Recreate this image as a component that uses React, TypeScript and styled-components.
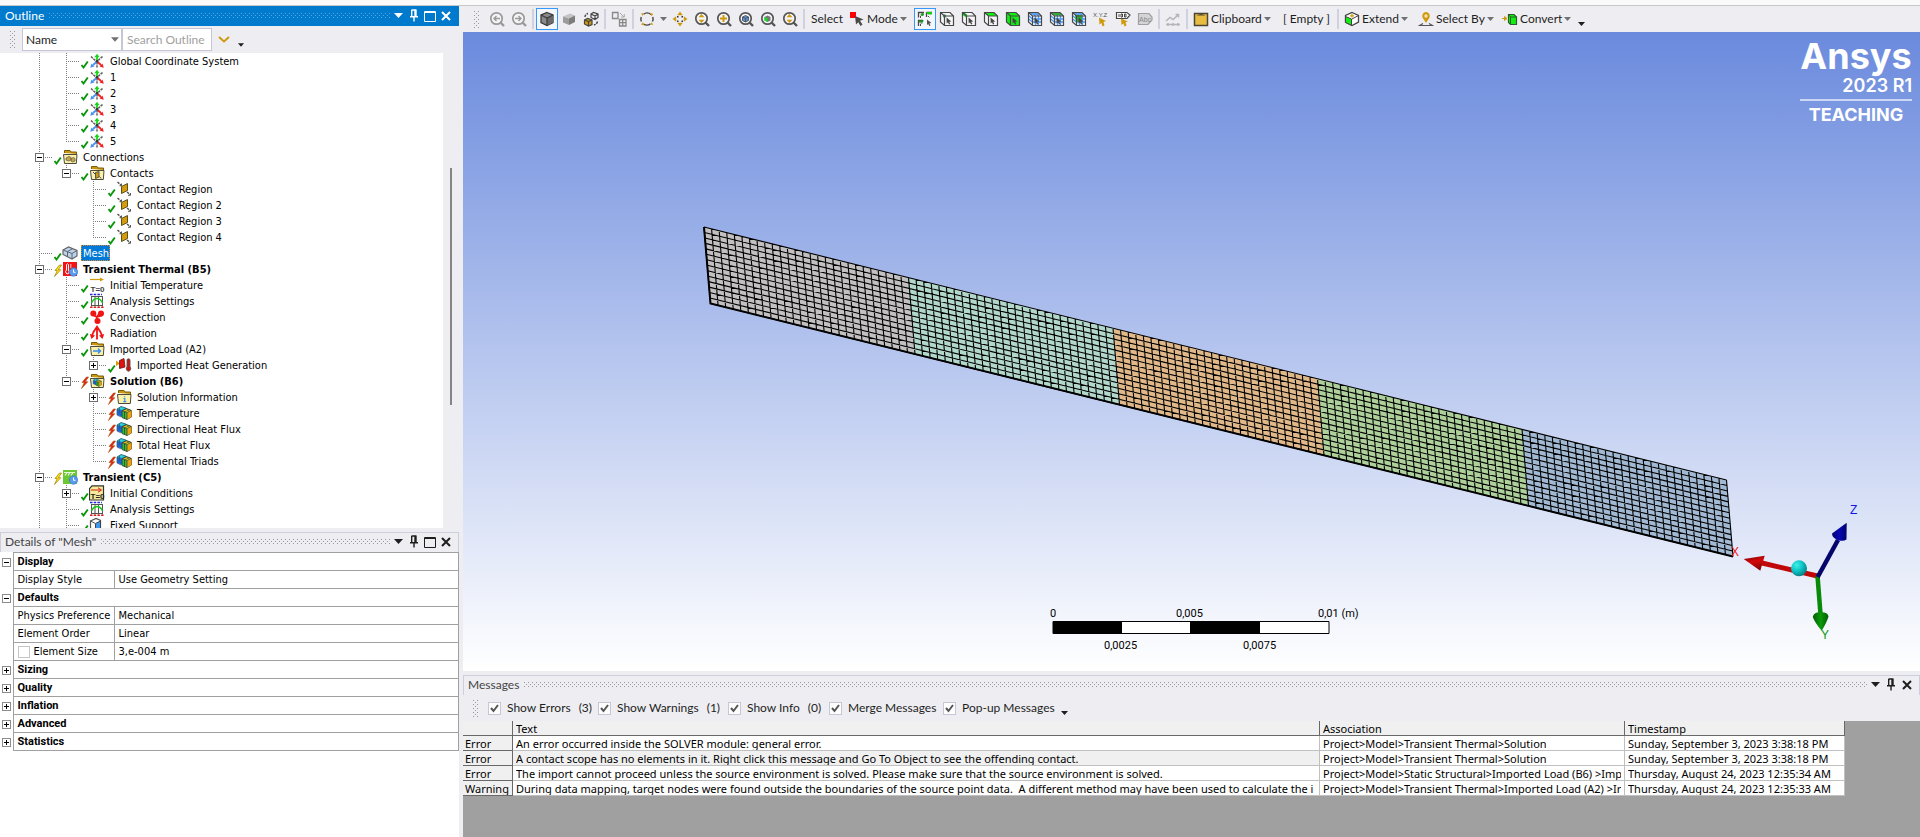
import React from 'react';
import styled, { createGlobalStyle, css } from 'styled-components';

const UI = "Lato, 'Noto Sans', sans-serif";
const TREE = "'DejaVu Sans Condensed', 'Noto Sans', sans-serif";
const GRID = "'Noto Sans', 'Open Sans', sans-serif";

const GlobalStyle = createGlobalStyle`
  * { box-sizing: border-box; }
  body { margin: 0; background: #eeeef2; font: 12px/16px ${UI}; color: #1e1e1e; }
  button, input, select { font: inherit; color: inherit; margin: 0; padding: 0; border: 0; background: none; border-radius: 0; }
`;

/* ---------- page frame ---------- */

const Page = styled.div`
  display: flex;
  flex-direction: column;
  height: 100vh;
  min-height: 600px;
`;
const TopStrip = styled.div`
  flex: none;
  height: 6px;
  background: #fafafa;
  border-bottom: 1px solid #c6c6cb;
`;
const Columns = styled.div`
  flex: 1;
  min-height: 0;
  display: grid;
  grid-template-columns: 459px minmax(0, 1fr);
  column-gap: 4px;
`;
const Column = styled.div`
  display: flex;
  flex-direction: column;
  gap: 4px;
  min-height: 0;
  min-width: 0;
`;
const WorkColumn = styled.main`
  display: flex;
  flex-direction: column;
  min-height: 0;
  min-width: 0;
`;
const Panel = styled.section<{ $grow?: boolean; $height?: number }>`
  display: flex;
  flex-direction: column;
  min-height: 0;
  flex: ${p => (p.$grow ? '1 1 0' : `0 0 ${p.$height}px`)};
`;

/* ---------- panel headers ---------- */

const dots = (color: string) => css`
  background-image: conic-gradient(at 1px 1px, transparent 75%, ${color} 0),
    conic-gradient(at 1px 1px, transparent 75%, ${color} 0);
  background-size: 4px 4px;
  background-position: 0 0, 2px 2px;
`;
const Header = styled.header<{ $active?: boolean }>`
  flex: none;
  display: flex;
  align-items: center;
  height: 20px;
  padding: 0 4px 2px;
  border: 1px solid ${p => (p.$active ? '#007acc' : '#cccedb')};
  border-bottom: 0;
  background: ${p => (p.$active ? '#007acc' : '#eeeef2')};
  color: ${p => (p.$active ? '#fff' : '#444')};
`;
const HeaderTitle = styled.h2`
  margin: 0 5px 0 0;
  font: 12px/17px ${UI};
`;
const HeaderDots = styled.div<{ $active?: boolean }>`
  flex: 1;
  height: 5px;
  ${p => dots(p.$active ? '#59a8de' : '#999')}
`;
const HeaderButton = styled.button`
  display: flex;
  align-items: center;
  justify-content: center;
  width: 16px;
  height: 16px;
  color: inherit;
`;
const HeaderButtons = styled.div<{ $active?: boolean }>`
  display: flex;
  color: ${p => (p.$active ? '#fff' : '#1e1e1e')};
`;

const Caret = ({ w = 9, h = 5 }: { w?: number; h?: number }) => (
  <svg width={w} height={h} viewBox="0 0 9 5" aria-hidden="true">
    <path d="M0 0H9L4.5 5Z" fill="currentColor" />
  </svg>
);

const PanelHeader = ({ title, active, maximize }: { title: string; active?: boolean; maximize?: boolean }) => (
  <Header $active={active}>
    <HeaderTitle>{title}</HeaderTitle>
    <HeaderDots $active={active} />
    <HeaderButtons $active={active}>
      <HeaderButton aria-label="Window options"><Caret /></HeaderButton>
      <HeaderButton aria-label="Pin">
        <svg width="10" height="13" viewBox="0 0 10 13" fill="none" stroke="currentColor" strokeWidth="1.4">
          <path d="M2.5 1H7.5M2.7 1V7.5M7 1V7.5M6 1V7.5M1 7.7H9M5 8V12.5" />
        </svg>
      </HeaderButton>
      {maximize && (
        <HeaderButton aria-label="Maximize">
          <svg width="12" height="12" viewBox="0 0 12 12" fill="none" stroke="currentColor">
            <path d="M.5 1.5H11.5V11.5H.5ZM.5 2.5H11.5" />
          </svg>
        </HeaderButton>
      )}
      <HeaderButton aria-label="Close">
        <svg width="10" height="10" viewBox="0 0 10 10" stroke="currentColor" strokeWidth="2">
          <path d="M1 1L9 9M9 1L1 9" />
        </svg>
      </HeaderButton>
    </HeaderButtons>
  </Header>
);

/* ---------- outline search bar ---------- */

const SearchBar = styled.form`
  flex: none;
  display: flex;
  align-items: center;
  height: 27px;
  padding-left: 10px;
  background: #eeeef2;
`;
const Grip = styled.span`
  flex: none;
  width: 5px;
  height: 17px;
  ${dots('#999')}
`;
const SelectWrap = styled.div`
  position: relative;
  display: flex;
  margin-left: 7px;
`;
const FilterSelect = styled.select`
  appearance: none;
  width: 100px;
  height: 23px;
  padding-left: 3px;
  border: 1px solid #c5c7d8;
  background: #fff;
`;
const SelectArrow = styled.span`
  position: absolute;
  right: 3px;
  top: 9px;
  display: flex;
  color: #717171;
  pointer-events: none;
`;
const SearchInput = styled.input`
  width: 90px;
  height: 23px;
  padding-left: 4px;
  border: 1px solid #c5c7d8;
  background: #fff;
  &::placeholder { color: #a0a0a0; opacity: 1; }
`;
const SearchGo = styled.button`
  display: flex;
  align-items: center;
  justify-content: center;
  width: 23px;
  height: 20px;
`;
const Overflow = styled.button`
  align-self: flex-end;
  display: flex;
  align-items: flex-end;
  justify-content: center;
  width: 11px;
  height: 16px;
  padding-bottom: 6px;
  color: #1e1e1e;
`;

/* ---------- tree ---------- */

const TreeFrame = styled.div`
  flex: 1;
  min-height: 0;
  display: flex;
  overflow: hidden;
`;
const TreeList = styled.ul`
  flex: 1;
  margin: 0;
  padding: 0 0 0 26px;
  list-style: none;
  overflow: hidden;
  background: #fff;
  font: 11px/16px ${TREE};
  color: #000;
`;
const TreeRow = styled.li`
  display: flex;
  align-items: center;
  height: 16px;
`;
const vline = 'repeating-linear-gradient(#808080 0 1px, transparent 1px 2px) 13px 0';
const hline = 'repeating-linear-gradient(90deg, #808080 0 1px, transparent 1px 2px) 13px 8px / 14px 1px no-repeat';
const guides: Record<string, string> = {
  ' ': 'none',
  '|': `${vline} / 1px 16px no-repeat`,
  '+': `${vline} / 1px 16px no-repeat, ${hline}`,
  L: `${vline} / 1px 9px no-repeat, ${hline}`,
};
const Guide = styled.span<{ $kind: string }>`
  flex: none;
  display: flex;
  align-items: center;
  justify-content: center;
  width: 27px;
  height: 16px;
  background: ${p => guides[p.$kind]};
`;
const Expander = styled.button<{ $tone?: string }>`
  position: relative;
  flex: none;
  width: 9px;
  height: 9px;
  border: 1px solid ${p => p.$tone || '#6e6e6e'};
  background: linear-gradient(#000, #000) center / 5px 1px no-repeat, #fff;
  &[aria-expanded='false'] {
    background: linear-gradient(#000, #000) center / 5px 1px no-repeat,
      linear-gradient(#000, #000) center / 1px 5px no-repeat, #fff;
  }
`;
const StateMark = styled.svg`
  flex: none;
  width: 9px;
  height: 16px;
`;
const TreeIcon = styled.svg`
  flex: none;
  width: 16px;
  height: 16px;
`;
const TreeLabel = styled.span<{ $bold?: boolean; $selected?: boolean }>`
  margin-left: 3px;
  padding: 0 1px 0 2px;
  height: 16px;
  line-height: 17px;
  white-space: nowrap;
  font-weight: ${p => (p.$bold ? 700 : 400)};
  ${p => p.$selected && css`
    background: #0078d7;
    color: #fff;
    outline: 1px dotted #d98a2b;
    outline-offset: -1px;
  `}
`;
const ScrollTrack = styled.div`
  flex: none;
  width: 16px;
  padding: 115px 0 0 7px;
  background: #eeeef2;
`;
const ScrollThumb = styled.div`
  width: 2px;
  height: 237px;
  background: #858585;
`;

const folder = (
  <>
    <path d="M2.5 4V1.5H8L9 3H14.5V5" fill="#c9980f" stroke="#7a5c07" />
    <path d="M1.5 5.5H15L14.3 14.5H2.5Z" fill="#fbf1a8" stroke="#4c4a3a" />
  </>
);
const resultCubes = (
  <>
    <path d="M1 4L5 1.5L10 3V9L6 12L1 10Z" fill="#1d66d8" />
    <path d="M1 4L5 1.5L10 3L6 5Z" fill="#2bd3c8" />
    <path d="M1 4L5 1.500L10 3M1 4V10L5 12M3.500 3V8" fill="none" stroke="#34506e" strokeWidth=".7" />
    <path d="M6 6L10.500 3.500L15.500 5.500V12L11 14.500L6 12.500Z" fill="#2fc02f" stroke="#333" strokeWidth=".8" />
    <path d="M11 7.500L15.500 5.500V12L11 14.500Z" fill="#f0a010" />
    <path d="M6 6L10.500 4L15 5.500L11 7.500Z" fill="#f4e31b" stroke="#333" strokeWidth=".6" />
    <path d="M8.500 6.700V13.500M11 7.500V14.500M13 5L8 7" stroke="#333" strokeWidth=".7" fill="none" />
  </>
);
const clock = (
  <>
    <circle cx="11.500" cy="11" r="4.200" fill="#5a9bf0" stroke="#2f6bc4" strokeWidth=".6" />
    <path d="M11.500 8.500V11.300H13.500" stroke="#fff" fill="none" />
  </>
);
const tZero = (
  <text x="1.500" y="14.500" fontSize="8" fontFamily="Liberation Sans, sans-serif" fontWeight="700" fill="#444">T=0</text>
);

const treeIcons: Record<string, React.ReactNode> = {
  axes: (
    <>
      <path d="M2 3.500L7.500 8.500M13.500 3.500L8.500 8M8 9V14.500" stroke="#5a5a5a" strokeWidth="1.500" strokeDasharray="2.500 .8" fill="none" />
      <path d="M8 8V3" stroke="#19d419" strokeWidth="1.800" />
      <path d="M5.300 4.300L8 .8L10.700 4.300Z" fill="#19d419" />
      <path d="M8 8.500L12 12" stroke="#f02020" strokeWidth="1.800" />
      <path d="M14.800 14.800L10.500 13.500L13.500 10.500Z" fill="#f02020" />
      <path d="M8 8.500L4 12" stroke="#4a90f0" strokeWidth="1.800" />
      <path d="M1.200 14.800L5.500 13.500L2.500 10.500Z" fill="#4a90f0" />
      <circle cx="8" cy="8.300" r="1.200" fill="#333" />
    </>
  ),
  connections: <>{folder}<path d="M4 9L7 7.500L9 8.500V11L6.500 12L4 11ZM9 9.500L11.500 8.500L13 9.500V12L10.500 13L9 12Z" fill="#c9a54a" stroke="#665" strokeWidth=".8" /></>,
  contacts: <>{folder}<path d="M6.500 7.500L10 6.500V12L6.500 13.500Z" fill="#c9980f" stroke="#555" /><path d="M4 7L6 9M10.500 11.500L12 13.500" stroke="#444" /></>,
  contact: (
    <>
      <path d="M1.500 1L5.500 4.500M11 11L14 13.500" stroke="#555" strokeWidth="1.400" strokeDasharray="2.500 .8" />
      <path d="M3.500 4.800H5.500V2.500M12 14.300H14.500V12" stroke="#555" fill="none" />
      <path d="M5.500 5.500L11.500 2.500V9.500L5.500 12.500Z" fill="#d39c0c" stroke="#5e4e20" />
    </>
  ),
  mesh: (
    <>
      <path d="M1 5L6.500 2L15 5.500V11L10 14L1 9.500Z" fill="#b9d2ee" stroke="#666" strokeWidth="1.200" />
      <path d="M1 5L10 8.500L15 5.500M10 8.500V14M5.500 6.500L10.500 3.800M5.500 6.800V11.500" stroke="#666" fill="none" />
    </>
  ),
  thermal: (
    <>
      <rect x="1" y="1" width="14" height="14" fill="#f01414" />
      <path d="M4.500 3.500Q5.500 2 6.500 3.500V9Q8 11 6.500 12.500Q5 13.500 4 12Q3 10.500 4.500 9Z" fill="#f01414" stroke="#fff" />
      <path d="M8 4H9.500M8 6H9.500" stroke="#fff" />
      {clock}
    </>
  ),
  transient: (
    <>
      <rect x="1" y="1" width="14" height="14" fill="#6cc832" />
      <path d="M2 3.500H13M3 6.500L5 3.500M6 6.500L8 3.500M9 6.500L11 3.500" stroke="#e9f7df" strokeWidth="1.200" />
      {clock}
    </>
  ),
  initTemp: <><path d="M1 2.500H12" stroke="#d39c0c" strokeWidth="1.200" /><path d="M11 .5L15 2.500L11 4.500Z" fill="#d39c0c" />{tZero}</>,
  settings: (
    <>
      <path d="M2.500 3V13.500M6 3V13.500M9.500 3V13.500M13.500 3V13.500M2.500 3.500H13.500M2.500 12.500H13.500" stroke="#555" />
      <path d="M1 1.500H13" stroke="#2222dd" strokeWidth="1.600" strokeDasharray="2.500 1.200" />
      <path d="M1 14.300H15" stroke="#dd2222" strokeWidth="1.600" strokeDasharray="2.500 1.200" />
      <path d="M2.500 10Q4.500 5.500 8 5.500Q11.500 5.500 13.500 10" stroke="#19c819" strokeWidth="1.400" fill="none" />
    </>
  ),
  convection: (
    <>
      <circle cx="4.300" cy="4.500" r="3" fill="#f01414" />
      <circle cx="12" cy="4.500" r="3" fill="#f01414" />
      <circle cx="8.500" cy="12" r="3" fill="#f01414" />
      <path d="M4 6L8 8L10.500 4M8 8L13 6.500M8 8L7.500 12" stroke="#f01414" strokeWidth="1.800" fill="none" />
    </>
  ),
  radiation: (
    <>
      <path d="M8 3V14.500M7.500 3.500Q4.500 5.500 3 11M8.500 3.500Q11.500 5.500 13 11" stroke="#f01414" strokeWidth="1.800" fill="none" />
      <path d="M5.500 4L8 0L10.500 4ZM.8 9L6 10.500L2.500 14ZM15.200 9L10 10.500L13.500 14Z" fill="#f01414" />
    </>
  ),
  importFolder: <>{folder}<path d="M4 10H11M9 7.500L11.500 10L9 12.500" stroke="#3b8af0" strokeWidth="1.400" fill="none" /></>,
  heatGen: (
    <>
      <path d="M0 3.500L4 6.500L0 9Z" fill="#d39c0c" />
      <path d="M3.500 3.500L8 1.500L9 10L3.500 11.500Z" fill="#e01010" stroke="#611" strokeWidth=".8" />
      <path d="M11 2.500Q12.500 1 14 2.500V9.500Q15.500 11.500 14 13.500Q12.500 15 11 13.500Q9.500 11.500 11 9.500Z" fill="#d01010" stroke="#555" strokeWidth=".9" />
    </>
  ),
  solution: <>{folder}<g transform="translate(3.500 5) scale(.58)">{resultCubes}</g></>,
  info: <>{folder}<path d="M8.500 7.300V8.300M7.500 9.500H8.800V12.500M7.300 12.700H10.300" stroke="#3b8af0" strokeWidth="1.200" fill="none" /></>,
  result: resultCubes,
  initCond: (
    <>
      <path d="M.5 14.500V3.500L3 .8H14.500V15H.5Z" fill="#f7ea9a" stroke="#333" strokeWidth="1.200" />
      <path d="M2 5H11M9 2.800L12.500 5L9 7.200" stroke="#cc1c1c" fill="none" />
      <text x="1.500" y="14" fontSize="8" fontFamily="Liberation Sans, sans-serif" fontWeight="700" fill="#222">T=0</text>
    </>
  ),
  fixed: (
    <>
      <path d="M1.500 4L7 1.500L11.500 3.500V11L7 14L1.500 11.500Z" fill="#fff" stroke="#555" strokeWidth="1.200" />
      <path d="M6.500 6.500L11.500 4V11.500L6.500 14Z" fill="#3b9af0" stroke="#444" />
      <path d="M1.500 4L6.500 6.500" stroke="#555" />
    </>
  ),
};

const marks: Record<string, React.ReactNode> = {
  ok: <path d="M1.500 12L3.500 14.500L7.800 8.500" stroke="#0a960a" strokeWidth="1.900" fill="none" />,
  yellow: <path d="M6.500 4L2 9.500H4.300L1.500 15.500L7.800 8.700H5.300L8.500 4Z" fill="#ffe600" stroke="#a8871a" strokeWidth=".8" />,
  red: <path d="M6.500 4L2 9.500H4.300L1.500 15.500L7.800 8.700H5.300L8.500 4Z" fill="#f01414" stroke="#a8651a" strokeWidth=".7" />,
};

type Node = { g: string; mark: string; icon: string; label: string; box?: '-' | '+'; bold?: boolean; selected?: boolean };
const nodes: Node[] = [
  { g: '|+', mark: 'ok', icon: 'axes', label: 'Global Coordinate System' },
  { g: '|+', mark: 'ok', icon: 'axes', label: '1' },
  { g: '|+', mark: 'ok', icon: 'axes', label: '2' },
  { g: '|+', mark: 'ok', icon: 'axes', label: '3' },
  { g: '|+', mark: 'ok', icon: 'axes', label: '4' },
  { g: '|L', mark: 'ok', icon: 'axes', label: '5' },
  { g: '+', box: '-', mark: 'ok', icon: 'connections', label: 'Connections' },
  { g: '|L', box: '-', mark: 'ok', icon: 'contacts', label: 'Contacts' },
  { g: '| +', mark: 'ok', icon: 'contact', label: 'Contact Region' },
  { g: '| +', mark: 'ok', icon: 'contact', label: 'Contact Region 2' },
  { g: '| +', mark: 'ok', icon: 'contact', label: 'Contact Region 3' },
  { g: '| L', mark: 'ok', icon: 'contact', label: 'Contact Region 4' },
  { g: '+', mark: 'ok', icon: 'mesh', label: 'Mesh', selected: true },
  { g: '+', box: '-', mark: 'yellow', icon: 'thermal', label: 'Transient Thermal (B5)', bold: true },
  { g: '|+', mark: 'ok', icon: 'initTemp', label: 'Initial Temperature' },
  { g: '|+', mark: 'ok', icon: 'settings', label: 'Analysis Settings' },
  { g: '|+', mark: 'ok', icon: 'convection', label: 'Convection' },
  { g: '|+', mark: 'ok', icon: 'radiation', label: 'Radiation' },
  { g: '|+', box: '-', mark: 'ok', icon: 'importFolder', label: 'Imported Load (A2)' },
  { g: '||L', box: '+', mark: 'ok', icon: 'heatGen', label: 'Imported Heat Generation' },
  { g: '|L', box: '-', mark: 'red', icon: 'solution', label: 'Solution (B6)', bold: true },
  { g: '| +', box: '+', mark: 'red', icon: 'info', label: 'Solution Information' },
  { g: '| +', mark: 'red', icon: 'result', label: 'Temperature' },
  { g: '| +', mark: 'red', icon: 'result', label: 'Directional Heat Flux' },
  { g: '| +', mark: 'red', icon: 'result', label: 'Total Heat Flux' },
  { g: '| L', mark: 'red', icon: 'result', label: 'Elemental Triads' },
  { g: '+', box: '-', mark: 'yellow', icon: 'transient', label: 'Transient (C5)', bold: true },
  { g: '|+', box: '+', mark: 'ok', icon: 'initCond', label: 'Initial Conditions' },
  { g: '|+', mark: 'ok', icon: 'settings', label: 'Analysis Settings' },
  { g: '|+', mark: 'ok', icon: 'fixed', label: 'Fixed Support' },
];

const Outline = () => (
  <Panel $grow>
    <PanelHeader title="Outline" active maximize />
    <SearchBar onSubmit={e => e.preventDefault()}>
      <Grip />
      <SelectWrap>
        <FilterSelect aria-label="Filter by" defaultValue="Name"><option>Name</option></FilterSelect>
        <SelectArrow><Caret w={8} h={5} /></SelectArrow>
      </SelectWrap>
      <SearchInput aria-label="Search Outline" placeholder="Search Outline" />
      <SearchGo type="button" aria-label="Search options">
        <svg width="12" height="7" viewBox="0 0 12 7" fill="none" stroke="#d09a10" strokeWidth="2"><path d="M1 1L6 5.500L11 1" /></svg>
      </SearchGo>
      <Overflow type="button" aria-label="More"><Caret w={6} h={4} /></Overflow>
    </SearchBar>
    <TreeFrame>
      <TreeList>
        {nodes.map((n, i) => (
          <TreeRow key={i}>
            {n.g.split('').map((kind, j) => (
              <Guide key={j} $kind={kind}>
                {n.box && j === n.g.length - 1 && (
                  <Expander aria-label={`Toggle ${n.label}`} aria-expanded={n.box === '-'} />
                )}
              </Guide>
            ))}
            <StateMark viewBox="0 0 9 16">{marks[n.mark]}</StateMark>
            <TreeIcon viewBox="0 0 16 16">{treeIcons[n.icon]}</TreeIcon>
            <TreeLabel $bold={n.bold} $selected={n.selected}>{n.label}</TreeLabel>
          </TreeRow>
        ))}
      </TreeList>
      <ScrollTrack><ScrollThumb /></ScrollTrack>
    </TreeFrame>
  </Panel>
);

/* ---------- details ---------- */

const DetailsBody = styled.div`
  flex: 1;
  min-height: 0;
  background: #fff;
`;
const DetailsTable = styled.table`
  width: 100%;
  table-layout: fixed;
  border-collapse: collapse;
  font: 11px/16px ${TREE};
  color: #000;
`;
const GutterCol = styled.col`width: 13px;`;
const NameCol = styled.col`width: 101px;`;
const DetailsRow = styled.tr`height: 18px;`;
const Gutter = styled.td`
  padding: 1px 0 0 2px;
  line-height: 0;
`;
const GroupCell = styled.th`
  padding: 1px 0 0 4px;
  border: 1px solid #a0a0a0;
  text-align: left;
  font: 700 11px/16px Roboto, sans-serif;
`;
const NameCell = styled.th`
  padding: 1px 0 0 4px;
  border: 1px solid #a0a0a0;
  text-align: left;
  font-weight: 400;
  white-space: nowrap;
`;
const ValueCell = styled.td`
  padding: 1px 0 0 4px;
  border: 1px solid #a0a0a0;
`;
const ParamLabel = styled.label`
  display: flex;
  align-items: center;
  gap: 4px;
`;
const ParamBox = styled.input`
  appearance: none;
  width: 12px;
  height: 12px;
  border: 1px solid #c4c4c4;
  background: #fff;
`;

type Detail = { group: string; open: boolean; props?: [string, string, boolean?][] };
const details: Detail[] = [
  { group: 'Display', open: true, props: [['Display Style', 'Use Geometry Setting']] },
  {
    group: 'Defaults', open: true, props: [
      ['Physics Preference', 'Mechanical'],
      ['Element Order', 'Linear'],
      ['Element Size', '3,e-004 m', true],
    ],
  },
  { group: 'Sizing', open: false },
  { group: 'Quality', open: false },
  { group: 'Inflation', open: false },
  { group: 'Advanced', open: false },
  { group: 'Statistics', open: false },
];

const Details = () => (
  <Panel $height={305}>
    <PanelHeader title={'Details of "Mesh"'} maximize />
    <DetailsBody>
      <DetailsTable>
        <colgroup><GutterCol /><NameCol /><col /></colgroup>
        <tbody>
          {details.map(d => (
            <React.Fragment key={d.group}>
              <DetailsRow>
                <Gutter><Expander $tone="#8c8c8c" aria-label={`Toggle ${d.group}`} aria-expanded={d.open} /></Gutter>
                <GroupCell colSpan={2}>{d.group}</GroupCell>
              </DetailsRow>
              {d.props?.map(([name, value, param]) => (
                <DetailsRow key={name}>
                  <Gutter />
                  <NameCell scope="row">
                    {param ? <ParamLabel><ParamBox type="checkbox" />{name}</ParamLabel> : name}
                  </NameCell>
                  <ValueCell>{value}</ValueCell>
                </DetailsRow>
              ))}
            </React.Fragment>
          ))}
        </tbody>
      </DetailsTable>
    </DetailsBody>
  </Panel>
);

/* ---------- graphics toolbar ---------- */

const Toolbar = styled.div`
  flex: none;
  display: flex;
  align-items: center;
  height: 26px;
  padding-left: 11px;
  background: #eeeef2;
`;
const ToolButton = styled.button<{ $on?: boolean }>`
  flex: none;
  display: flex;
  align-items: center;
  justify-content: center;
  width: 22px;
  height: 22px;
  border: 1px solid ${p => (p.$on ? '#3399ff' : 'transparent')};
  background: ${p => (p.$on ? '#f5f6fa' : 'transparent')};
`;
const IconGroup = styled.div`
  display: flex;
  margin-left: 7px;
`;
const Divider = styled.span`
  flex: none;
  width: 2px;
  height: 20px;
  margin: 0 2px;
  background: #d0d1df;
`;
const CaretButton = styled.button`
  display: flex;
  align-items: center;
  justify-content: center;
  width: 11px;
  height: 22px;
  color: #717171;
`;
const ToolLabel = styled.span<{ $width: number }>`
  flex: none;
  width: ${p => p.$width}px;
  padding-left: 4px;
  white-space: nowrap;
`;
const MenuButton = styled.button<{ $width: number }>`
  flex: none;
  display: flex;
  align-items: center;
  gap: 2px;
  width: ${p => p.$width}px;
  height: 22px;
  padding-left: 3px;
  white-space: nowrap;
  svg:last-child { color: #717171; }
`;
const ToolIcon = styled.svg`
  flex: none;
  width: 16px;
  height: 16px;
`;

const lens = (color: string) => (
  <>
    <circle cx="7.500" cy="7.500" r="5.700" fill="#f4f4f6" stroke={color} strokeWidth="1.700" />
    <path d="M11.500 11.500L15 15" stroke={color} strokeWidth="2.400" />
  </>
);
const cubeLines = 'M1.500 1.500H11L14.500 5V14.500H5.500L1.500 11ZM1.500 1.500L5.500 5H14.500M5.500 5V14.500';
const pointer = <path d="M7.500 6.500L12.300 10.500L10.200 10.800L11.300 13L10 13.500L9 11.300L7.700 12.500Z" fill="#444" />;
const selCube = (fill: string, extra?: React.ReactNode) => (
  <>
    <path d="M1.500 1.500H11L14.500 5V14.500H5.500L1.500 11Z" fill={fill} />
    {extra}
    <path d={cubeLines} fill="none" stroke="#484848" strokeWidth="1.200" />
    {pointer}
  </>
);
const meshGrid = (
  <path d="M4.500 1.500L8.500 5V14.500M8 1.500L11.500 5V14.500M5.500 8H14.500M5.500 11H14.500M1.500 4.500L5.500 8M1.500 8L5.500 11M3.500 3H12.500" fill="none" stroke="#4a9af5" strokeWidth="1.300" />
);
const goldArrows = <path d="M7.500 3L10.500 6.300H4.500ZM7.500 12L10.500 8.700H4.500Z" fill="#d09a10" />;

const toolIcons: Record<string, React.ReactNode> = {
  prev: <>{lens('#999')}<path d="M11 7.500H5M7.500 5L5 7.500L7.500 10" stroke="#999" strokeWidth="1.400" fill="none" /></>,
  next: <>{lens('#999')}<path d="M4 7.500H10M7.500 5L10 7.500L7.500 10" stroke="#999" strokeWidth="1.400" fill="none" /></>,
  shadedEdges: (
    <>
      <path d="M8 1.500L14 4V11.500L8 14.500L2 11.500V4Z" fill="#8a8a8a" stroke="#3a3a3a" strokeWidth="1.300" />
      <path d="M8 7L14 4V11.500L8 14.500Z" fill="#6a6a6a" />
      <path d="M2 4L8 7L14 4M8 7V14.500" stroke="#3a3a3a" strokeWidth="1.200" fill="none" />
    </>
  ),
  shaded: (
    <>
      <path d="M2 5.500L9 2.500L14 4.500L8 7.500Z" fill="#c4c4c4" />
      <path d="M2 5.500L8 7.500V14L2 11.500Z" fill="#9c9c9c" />
      <path d="M8 7.500L14 4.500V11L8 14Z" fill="#7c7c7c" />
    </>
  ),
  explode: (
    <>
      <path d="M1.500 9L4.500 7.500L9 9V13.500L5.500 15L1.500 13Z" fill="#d09a10" stroke="#444" strokeWidth="1.200" />
      <path d="M1.500 9L5.500 10.500L9 9M5.500 10.500V15M8 3L10.500 1.500L15 3V6.500L12 8.500L8 6.500ZM8 3L12 5L15 3M12 5V8.500" fill="none" stroke="#444" strokeWidth="1.200" />
      <path d="M2 6Q2 3.500 5 2.500M14.500 10.500Q14 13 11 14" fill="none" stroke="#444" strokeWidth="1.400" strokeDasharray="2.500 1" />
    </>
  ),
  split: (
    <>
      <path d="M1.500 1.500H7V7.500H1.500ZM8.500 8.500H15V15H8.500ZM11.700 8.500V15M8.500 11.700H15" fill="none" stroke="#888" strokeWidth="1.300" />
      <path d="M9 2L13 6M10 6H13.300V3" fill="none" stroke="#aaa" />
    </>
  ),
  rotate: (
    <>
      <path d="M4.500 3.300A6 6 0 0 1 12 3.500M13.700 6A6 6 0 0 1 13.500 10.500M11.500 12.800A6 6 0 0 1 4.500 13M2.400 10.500A6 6 0 0 1 2.300 6" fill="none" stroke="#444" strokeWidth="1.400" />
      <path d="M11 1.800L14.300 3L12.500 5.300ZM5.500 14.500L2 13.500L4 11.200ZM2 2.500L4.700 2.200L3.700 5ZM14.300 13.500L11.500 14L12.500 11.200Z" fill="#d09a10" />
    </>
  ),
  pan: (
    <>
      <path d="M8 .5L10.800 4.200H5.200ZM8 15.500L10.800 11.800H5.200ZM.5 8L4.200 5.200V10.800ZM15.500 8L11.800 5.200V10.800Z" fill="#d09a10" />
      <path d="M5 5H6.500V6.500H5ZM9.500 5H11V6.500H9.500ZM5 9.500H6.500V11H5ZM9.500 9.500H11V11H9.500Z" fill="#333" />
    </>
  ),
  zoomUpDown: <>{lens('#555')}{goldArrows}</>,
  zoomIn: <>{lens('#555')}<path d="M7.500 4V11M4 7.500H11" stroke="#d09a10" strokeWidth="2" /></>,
  zoomFit: <>{lens('#555')}<path d="M4.500 6L7.500 4.500L10.500 6V9.500L7.500 11L4.500 9.500Z" fill="#5a90d0" stroke="#444" strokeWidth=".8" /><path d="M4.500 6L7.500 7.500L10.500 6M7.500 7.500V11" fill="none" stroke="#444" strokeWidth=".7" /></>,
  zoomSel: <>{lens('#555')}<path d="M4.500 6L7.500 4.500L10.500 6V9.500L7.500 11L4.500 9.500Z" fill="#777" /><path d="M4.500 6L7.500 7.500V11L4.500 9.500Z" fill="#10e020" /></>,
  mode: <><path d="M1 1H7V7H1Z" fill="#ff0000" /><path d="M6 5L14.500 8.500L11 9.800L13.500 13.500L11.500 15L9.300 11.200L7 13.500Z" fill="#4a4a4a" /></>,
  smart: (
    <>
      <path d="M1.500 6.500V1.500H7M9.500 1.500H15M9.500 1.500V6M1.500 15V9.500H6" fill="none" stroke="#484848" strokeWidth="1.300" />
      <path d="M3.500 7V4H6M11 5L13 7M3.500 15V12H6" fill="none" stroke="#484848" strokeDasharray="2 1" />
      <circle cx="5.500" cy="3.500" r="1.400" fill="#1aa01a" /><path d="M9 1H15V3.500H11Z" fill="#10d010" /><path d="M2 9.500H7L5.500 11.500H2Z" fill="#1aa01a" />
      <path d="M10 8.500L14.500 12L12.500 12.300L13.500 14.500L12.200 15L11.300 13L10 14Z" fill="#555" />
    </>
  ),
  vertex: selCube('#f6f6f8', <circle cx="5.500" cy="5" r="1.800" fill="#4aa06a" />),
  edge: selCube('#f6f6f8', <path d="M1.500 2L5.500 5" stroke="#10e010" strokeWidth="3" />),
  face: selCube('#f6f6f8', <path d="M1.500 1.500H11L14.500 5H5.500Z" fill="#10f010" />),
  body: selCube('#10f010'),
  node: selCube('#f6f6f8', meshGrid),
  elemFace: selCube('#f6f6f8', <>{meshGrid}<path d="M3 2H11L13 4.500H6Z" fill="#2fae2f" /></>),
  elem: selCube('#f6f6f8', <>{meshGrid}<path d="M4 4H11V11H5Z" fill="#2fae2f" /></>),
  xyz: (
    <>
      <text x="0" y="5.500" fontSize="6" fontFamily="Liberation Sans, sans-serif" fill="#555">X.Y.Z</text>
      <path d="M6 6.500L13 10L10.500 11L11.500 14.500L9.500 15.500L8.500 12L6.500 13.500Z" fill="#d09a10" />
    </>
  ),
  tag: (
    <>
      <path d="M1.500 1.500H12L15 4L12 7.500H1.500Z" fill="#fff" stroke="#444" strokeWidth="1.200" />
      <path d="M4 3V6M6 3V6H7.500V3ZM9.500 3V6H11V3Z" fill="none" stroke="#444" />
      <path d="M6 7.500L13 10.500L10.500 11.300L11.500 14.500L9.500 15.500L8.500 12.500L6.500 14Z" fill="#d09a10" />
    </>
  ),
  abc: (
    <>
      <path d="M1.500 2.500H12L15 6V9L11 13.500H1.500Z" fill="#d4d4d6" stroke="#a0a0a0" strokeWidth="1.200" />
      <text x="2" y="10.500" fontSize="7" fontFamily="Liberation Sans, sans-serif" fill="#888">Abc</text>
    </>
  ),
  chart: (
    <path d="M1 10L5 6.500L8 8.500L13 4M10.500 3.500H13.500V6.500M1 13.500H15M3 12V15M8 12V15M13 12V15" fill="none" stroke="#b5b5b8" strokeWidth="1.400" />
  ),
  clipboard: (
    <>
      <path d="M1.500 2.500H14.500V14.500H1.500Z" fill="#e8bc40" stroke="#4a4536" strokeWidth="1.500" />
      <path d="M3.500 4.500Q8 1.500 12.500 4.500Z" fill="#4a4536" />
    </>
  ),
  extend: (
    <>
      <path d="M8 1.500L14.500 4.500V11L8 14.500L1.500 11V4.500Z" fill="#fff" stroke="#444" strokeWidth="1.300" />
      <path d="M1.500 5.500L7.500 8V14.300L1.500 11.500Z" fill="#10f010" stroke="#444" />
      <path d="M8 8L14.500 4.500" stroke="#444" /><path d="M8 3V6.500M6 4.800H10" stroke="#d09a10" strokeWidth="1.300" />
    </>
  ),
  selectBy: (
    <>
      <path d="M8 12L4.500 6.500Q3.500 1.500 8 1Q12.500 1.500 11.500 6.500Z" fill="#d09a10" />
      <circle cx="8" cy="5" r="1.700" fill="#f6e6b4" />
      <path d="M5 12.500L1.500 14.500H14.500L11 12.500" fill="none" stroke="#555" strokeWidth="1.200" />
    </>
  ),
  convert: (
    <>
      <path d="M0 7.500H4M2.500 5.500L5 7.500L2.500 9.500Z" stroke="#d09a10" fill="#d09a10" />
      <path d="M6.500 3.500H12L14.500 6V13.500H8.500L6.500 11.500Z" fill="#10f010" stroke="#2e5c2e" strokeWidth="1.200" />
      <path d="M6.500 3.500L8.500 6H14.500M8.500 6V13.500" stroke="#2e5c2e" fill="none" />
    </>
  ),
};

const Tool = ({ icon, name, on }: { icon: string; name: string; on?: boolean }) => (
  <ToolButton $on={on} aria-label={name} aria-pressed={on}>
    <ToolIcon viewBox="0 0 16 16">{toolIcons[icon]}</ToolIcon>
  </ToolButton>
);
const Menu = ({ icon, children, width }: { icon: string; children: string; width: number }) => (
  <MenuButton $width={width}>
    <ToolIcon viewBox="0 0 16 16">{toolIcons[icon]}</ToolIcon>
    {children}
    <Caret w={7} h={4} />
  </MenuButton>
);

const GraphicsToolbar = () => (
  <Toolbar role="toolbar" aria-label="Graphics">
    <Grip />
    <IconGroup><Tool icon="prev" name="Previous view" /><Tool icon="next" name="Next view" /></IconGroup>
    <Divider />
    <Tool icon="shadedEdges" name="Shaded with edges" on />
    <Tool icon="shaded" name="Shaded" />
    <Tool icon="explode" name="Explode" />
    <Divider />
    <Tool icon="split" name="Viewports" />
    <Divider />
    <Tool icon="rotate" name="Rotate" />
    <CaretButton aria-label="Rotate options"><Caret w={7} h={4} /></CaretButton>
    <Tool icon="pan" name="Pan" />
    <Tool icon="zoomUpDown" name="Zoom" />
    <Tool icon="zoomIn" name="Box zoom" />
    <Tool icon="zoomFit" name="Zoom to fit" />
    <Tool icon="zoomSel" name="Zoom to selection" />
    <Tool icon="zoomUpDown" name="Magnifier" />
    <Divider />
    <ToolLabel $width={39}>Select</ToolLabel>
    <Menu icon="mode" width={68}>Mode</Menu>
    <Tool icon="smart" name="Smart select" on />
    <Tool icon="vertex" name="Vertex" />
    <Tool icon="edge" name="Edge" />
    <Tool icon="face" name="Face" />
    <Tool icon="body" name="Body" />
    <Tool icon="node" name="Node" />
    <Tool icon="elemFace" name="Element face" />
    <Tool icon="elem" name="Element" />
    <Tool icon="xyz" name="Coordinates" />
    <Tool icon="tag" name="Tag" />
    <Tool icon="abc" name="Label" />
    <Divider />
    <Tool icon="chart" name="Chart" />
    <Divider />
    <Menu icon="clipboard" width={89}>Clipboard</Menu>
    <ToolLabel $width={56}>[ Empty ]</ToolLabel>
    <Divider />
    <Menu icon="extend" width={74}>Extend</Menu>
    <Menu icon="selectBy" width={84}>Select By</Menu>
    <Menu icon="convert" width={77}>Convert</Menu>
    <Overflow aria-label="More"><Caret w={7} h={4} /></Overflow>
  </Toolbar>
);

/* ---------- 3D view ---------- */

const Viewport = styled.section`
  position: relative;
  flex: 1;
  min-height: 0;
  overflow: hidden;
  background: linear-gradient(#6a8add, #fff);
`;
const Scene = styled.svg`
  display: block;
  width: 100%;
  height: 100%;
`;
const Brand = styled.div`
  position: absolute;
  top: 4px;
  right: 8px;
  width: 112px;
  color: #fff;
  font-family: Inter, sans-serif;
  text-align: center;
`;
const BrandName = styled.div`
  font-size: 36px;
  font-weight: 700;
  line-height: 40px;
`;
const BrandRelease = styled.div`
  padding-bottom: 3px;
  border-bottom: 2px solid #ccd7f5;
  font-size: 18px;
  font-weight: 600;
  line-height: 20px;
  text-align: right;
`;
const BrandEdition = styled.div`
  padding-top: 4px;
  font-size: 18px;
  font-weight: 700;
  line-height: 20px;
`;
const ScaleText = styled.text`
  font: 11px Roboto, sans-serif;
  fill: #000;
`;
const AxisText = styled.text`
  font: 12px 'Liberation Sans', sans-serif;
`;

const ORIGIN = [241, 195];
const ALONG = [1022.500, 253];
const DOWN = [6.500, 76.500];
const at = (u: number, v: number) =>
  `${(ORIGIN[0] + ALONG[0] * u + DOWN[0] * v).toFixed(2)} ${(ORIGIN[1] + ALONG[1] * u + DOWN[1] * v).toFixed(2)}`;
const bodies = ['#c3c0c2', '#b2d7cb', '#e0b88a', '#aed19c', '#a2b9d3'];
const COLS = 135;
const ROWS = 14;
const uprights = Array.from({ length: COLS + 1 }, (_, i) => `M${at(i / COLS, 0)}L${at(i / COLS, 1)}`).join('');
const courses = Array.from({ length: ROWS + 1 }, (_, i) => `M${at(0, i / ROWS)}L${at(1, i / ROWS)}`).join('');

const GraphicsView = () => (
  <Viewport aria-label="Graphics view">
    <Scene viewBox="0 0 1457 639">
      <defs>
        <radialGradient id="ball" cx=".35" cy=".3" r=".75">
          <stop offset="0" stopColor="#3ff0ea" /><stop offset=".5" stopColor="#0cc4c4" /><stop offset="1" stopColor="#067a80" />
        </radialGradient>
        <linearGradient id="redCone" x2=".3" y2="1"><stop offset="0" stopColor="#7a0404" /><stop offset=".5" stopColor="#d40808" /><stop offset="1" stopColor="#8a0404" /></linearGradient>
        <linearGradient id="greenCone"><stop offset="0" stopColor="#045c04" /><stop offset=".5" stopColor="#0a9a0a" /><stop offset="1" stopColor="#045c04" /></linearGradient>
        <linearGradient id="blueCone"><stop offset="0" stopColor="#04046a" /><stop offset=".5" stopColor="#0606b4" /><stop offset="1" stopColor="#04046a" /></linearGradient>
      </defs>
      {bodies.map((c, i) => (
        <path key={c} fill={c} d={`M${at(i / 5, 0)}L${at((i + 1) / 5, 0)}L${at((i + 1) / 5, 1)}L${at(i / 5, 1)}Z`} />
      ))}
      <path d={uprights + courses} fill="none" stroke="#000" strokeWidth="1.100" />
      <path d={`M${at(0, 0)}L${at(0, 1)}L${at(1, 1)}`} fill="none" stroke="#000" strokeWidth="2" />

      <path d="M590 589.500H866V601.500H590Z" fill="#fff" stroke="#000" />
      <path d="M590 590H659V602H590ZM727 590H797V602H727Z" fill="#000" />
      <ScaleText x="587" y="585">0</ScaleText>
      <ScaleText x="713" y="585">0,005</ScaleText>
      <ScaleText x="855" y="585">0,01 (m)</ScaleText>
      <ScaleText x="641" y="617">0,0025</ScaleText>
      <ScaleText x="780" y="617">0,0075</ScaleText>

      <path d="M1354.500 544L1299 531" stroke="#c00808" strokeWidth="5" />
      <path d="M1280.700 527L1301.700 523.700L1297.300 538.700Z" fill="url(#redCone)" />
      <circle cx="1336" cy="536.300" r="8" fill="url(#ball)" />
      <path d="M1354.500 544L1357.500 582" stroke="#078a07" strokeWidth="4.500" />
      <path d="M1349.800 585Q1350.500 580 1357.500 580.300Q1365 580 1365.500 584.500Q1364 590 1358.700 598.700Q1352 591 1349.800 585Z" fill="url(#greenCone)" />
      <path d="M1354.700 545L1375 508" stroke="#05056e" strokeWidth="4.500" />
      <path d="M1383.700 490.700L1369 501.500Q1369 506 1376 508.500Q1381 509.500 1383.500 507.500Z" fill="url(#blueCone)" />
      <AxisText x="1387" y="482" fill="#1414e6">Z</AxisText>
      <AxisText x="1268" y="524" fill="#f01414">X</AxisText>
      <AxisText x="1358" y="607" fill="#0a9a0a">Y</AxisText>
    </Scene>
    <Brand>
      <BrandName>Ansys</BrandName>
      <BrandRelease>2023 R1</BrandRelease>
      <BrandEdition>TEACHING</BrandEdition>
    </Brand>
  </Viewport>
);

/* ---------- messages ---------- */

const MessagesPanel = styled.section`
  flex: 0 0 162px;
  display: flex;
  flex-direction: column;
  margin-top: 4px;
`;
const FilterBar = styled.div`
  flex: none;
  display: flex;
  align-items: center;
  height: 26px;
  padding-left: 10px;
`;
const FilterItem = styled.label<{ $width: number }>`
  flex: none;
  display: flex;
  align-items: center;
  gap: 6px;
  width: ${p => p.$width}px;
  white-space: nowrap;
`;
const FilterList = styled.div`
  display: flex;
  margin-left: 10px;
`;
const Count = styled.span`margin-left: 2px;`;
const CheckWrap = styled.span`
  position: relative;
  display: flex;
`;
const CheckBox = styled.input`
  appearance: none;
  width: 13px;
  height: 13px;
  border: 1px solid #c5c7d8;
  background: #fdfdfd;
  & + svg { position: absolute; left: 2px; top: 2px; visibility: hidden; pointer-events: none; }
  &:checked + svg { visibility: visible; }
`;
const GridArea = styled.div`
  flex: 1;
  min-height: 0;
  overflow: hidden;
  background: #a0a0a0;
`;
const MessageTable = styled.table`
  width: 1382px;
  table-layout: fixed;
  border-collapse: separate;
  border-spacing: 0;
  font: 11px/15px ${GRID};
  color: #000;
`;
const SizedCol = styled.col<{ $width: number }>`width: ${p => p.$width}px;`;
const HeadCell = styled.th`
  padding: 0 0 0 3px;
  border-right: 1px solid #696969;
  border-bottom: 1px solid #696969;
  background: #f0f0f0;
  text-align: left;
  font-weight: 400;
`;
const KindCell = styled.th`
  padding: 0 2px;
  border-right: 1px solid #696969;
  border-bottom: 1px solid #696969;
  background: #f0f0f0;
  overflow: hidden;
  text-align: left;
  font-weight: 400;
  white-space: nowrap;
`;
const Cell = styled.td<{ $shaded?: boolean }>`
  padding: 0 3px;
  border-right: 1px solid #c0c0c0;
  border-bottom: 1px solid #c0c0c0;
  background: ${p => (p.$shaded ? '#f0f0f0' : '#fff')};
  overflow: hidden;
  white-space: pre;
`;
const Clip = styled.div`
  height: 14px;
  overflow: hidden;
  line-height: 16px;
`;

const filters: [string, string, number][] = [
  ['Show Errors', '(3)', 110],
  ['Show Warnings', '(1)', 130],
  ['Show Info', '(0)', 101],
  ['Merge Messages', '', 114],
  ['Pop-up Messages', '', 116],
];
const messages = [
  ['Error', 'An error occurred inside the SOLVER module: general error.', 'Project>Model>Transient Thermal>Solution', 'Sunday, September 3, 2023 3:38:18 PM'],
  ['Error', 'A contact scope has no elements in it. Right click this message and Go To Object to see the offending contact.', 'Project>Model>Transient Thermal>Solution', 'Sunday, September 3, 2023 3:38:18 PM'],
  ['Error', 'The import cannot proceed unless the source environment is solved. Please make sure that the source environment is solved.', 'Project>Model>Static Structural>Imported Load (B6) >Imp', 'Thursday, August 24, 2023 12:35:34 AM'],
  ['Warning', 'During data mapping, target nodes were found outside the boundaries of the source point data.  A different method may have been used to calculate the i', 'Project>Model>Transient Thermal>Imported Load (A2) >Ir', 'Thursday, August 24, 2023 12:35:33 AM'],
];

const Messages = () => (
  <MessagesPanel>
    <PanelHeader title="Messages" />
    <FilterBar>
      <Grip />
      <FilterList>
        {filters.map(([name, count, width]) => (
          <FilterItem key={name} $width={width}>
            <CheckWrap>
              <CheckBox type="checkbox" defaultChecked />
              <svg width="9" height="9" viewBox="0 0 9 9" fill="none" stroke="#555" strokeWidth="2"><path d="M1 4L3.500 7L8 1" /></svg>
            </CheckWrap>
            {name}
            {count && <Count>{count}</Count>}
          </FilterItem>
        ))}
      </FilterList>
      <Overflow aria-label="More"><Caret w={7} h={4} /></Overflow>
    </FilterBar>
    <GridArea>
      <MessageTable>
        <colgroup><SizedCol $width={50} /><SizedCol $width={807} /><SizedCol $width={305} /><SizedCol $width={220} /></colgroup>
        <thead>
          <tr>
            {['', 'Text', 'Association', 'Timestamp'].map(h => <HeadCell key={h} scope="col"><Clip>{h}</Clip></HeadCell>)}
          </tr>
        </thead>
        <tbody>
          {messages.map(([kind, ...cells], i) => (
            <tr key={i}>
              <KindCell scope="row"><Clip>{kind}</Clip></KindCell>
              {cells.map((c, j) => <Cell key={j} $shaded={i === 1 && j === 0}><Clip>{c}</Clip></Cell>)}
            </tr>
          ))}
        </tbody>
      </MessageTable>
    </GridArea>
  </MessagesPanel>
);

export default function App() {
  return (
    <Page>
      <GlobalStyle />
      <TopStrip />
      <Columns>
        <Column as="aside">
          <Outline />
          <Details />
        </Column>
        <WorkColumn>
          <GraphicsToolbar />
          <GraphicsView />
          <Messages />
        </WorkColumn>
      </Columns>
    </Page>
  );
}
